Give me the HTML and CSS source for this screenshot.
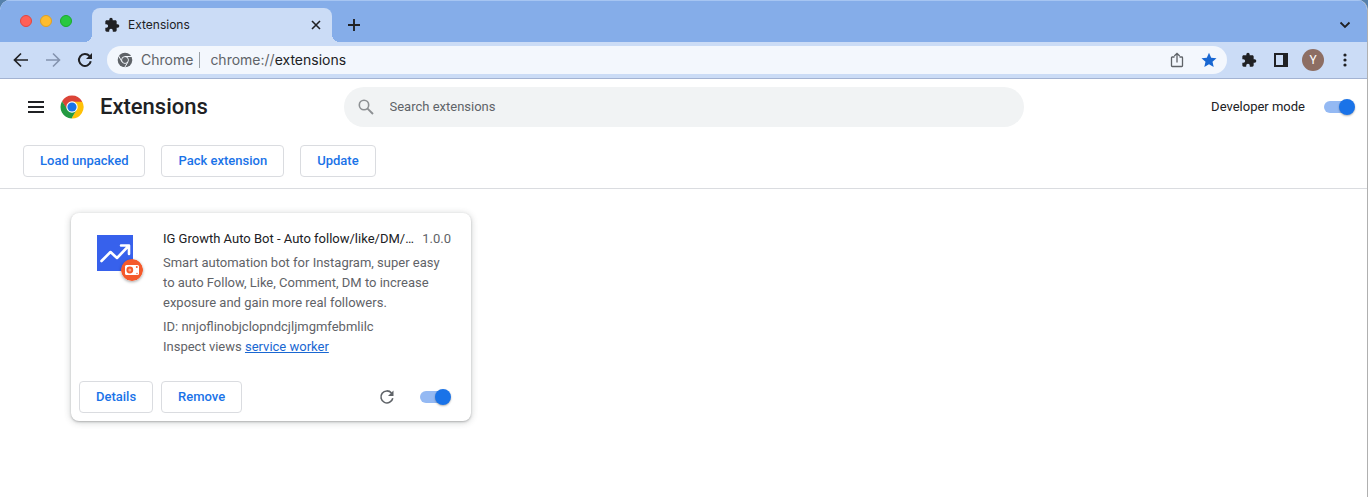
FILE: index.html
```html
<!DOCTYPE html>
<html lang="en">
<head>
<meta charset="utf-8">
<title>Extensions</title>
<link rel="stylesheet" href="styles.css">
</head>
<body>
<div class="window">
  <header class="tabstrip">
    <div class="lights">
      <button class="light close" aria-label="Close window"></button>
      <button class="light minimize" aria-label="Minimize window"></button>
      <button class="light maximize" aria-label="Maximize window"></button>
    </div>
    <div class="tab">
      <svg class="icon-16" viewBox="0 0 24 24"><path d="M20.500 11H19V7c0-1.100-.9-2-2-2h-4V3.500a2.500 2.500 0 0 0-5 0V5H4c-1.100 0-2 .9-2 2v3.800h1.500a2.700 2.700 0 0 1 0 5.400H2V20c0 1.100.9 2 2 2h3.800v-1.500a2.700 2.700 0 0 1 5.400 0V22H17c1.100 0 2-.9 2-2v-4h1.500a2.500 2.500 0 0 0 0-5z"/></svg>
      <span class="tab-title">Extensions</span>
      <button class="plain tab-close" aria-label="Close tab"><svg class="icon-12 stroke" viewBox="0 0 12 12"><path d="M2 2l8 8M10 2l-8 8" stroke-width="1.600"/></svg></button>
    </div>
    <button class="plain new-tab" aria-label="New tab"><svg class="icon-12 stroke" viewBox="0 0 12 12"><path d="M6 0v12M0 6h12" stroke-width="1.900"/></svg></button>
    <button class="plain tab-search" aria-label="Search tabs"><svg class="icon-12 stroke" viewBox="0 0 12 12"><path d="M1.500 3.500L6 8l4.500-4.500" stroke-width="1.800"/></svg></button>
  </header>

  <nav class="toolbar">
    <div class="nav-buttons">
      <button class="plain" aria-label="Back"><svg class="icon-16 stroke" viewBox="0 0 16 16"><path d="M15 8H2M8 1.500L1.500 8 8 14.500" stroke-width="1.700"/></svg></button>
      <button class="plain muted" aria-label="Forward"><svg class="icon-16 stroke" viewBox="0 0 16 16"><path d="M1 8h13M8 1.500L14.500 8 8 14.500" stroke-width="1.600"/></svg></button>
      <button class="plain" aria-label="Reload"><svg class="icon-16 stroke" viewBox="0 0 16 16"><path d="M13.800 9.300A6 6 0 1 1 12.500 4" stroke-width="2"/><path class="solid" d="M15 1v6H9z"/></svg></button>
    </div>
    <div class="omnibox">
      <svg class="icon-16 chrome-gray" viewBox="0 0 16 16"><circle cx="8" cy="8" r="7.300"/><g class="cut"><path d="M8 4.500H15M5 9.800L1.500 3.700M11 9.800L7.500 15.800" /><circle cx="8" cy="8" r="3.400"/></g><circle cx="8" cy="8" r="2.500"/></svg>
      <span class="site">Chrome</span>
      <span class="divider"></span>
      <label class="scheme" for="address">chrome://</label><input id="address" class="address" type="text" value="extensions">
      <button class="plain" aria-label="Share"><svg class="icon-16 share" viewBox="0 0 16 16"><path d="M5.500 5H3.200c-.4 0-.7.3-.7.7v8.100c0 .4.3.7.7.7h9.600c.4 0 .7-.3.7-.7V5.700c0-.4-.3-.7-.7-.7h-2.300M8 10.500V1.500M5.300 4L8 1.300 10.700 4"/></svg></button>
      <button class="plain star" aria-label="Bookmark"><svg class="icon-16" viewBox="0 0 16 16"><path d="M8 .7l2.200 5 5.300.5-4 3.600 1.200 5.300L8 12.300l-4.700 2.800 1.200-5.300-4-3.600 5.300-.5z"/></svg></button>
    </div>
    <div class="actions">
      <button class="plain" aria-label="Extensions menu"><svg class="icon-16" viewBox="0 0 24 24"><path d="M20.500 11H19V7c0-1.100-.9-2-2-2h-4V3.500a2.500 2.500 0 0 0-5 0V5H4c-1.100 0-2 .9-2 2v3.800h1.500a2.700 2.700 0 0 1 0 5.400H2V20c0 1.100.9 2 2 2h3.800v-1.500a2.700 2.700 0 0 1 5.400 0V22H17c1.100 0 2-.9 2-2v-4h1.500a2.500 2.500 0 0 0 0-5z"/></svg></button>
      <button class="plain" aria-label="Side panel"><svg class="icon-16" viewBox="0 0 16 16"><path fill-rule="evenodd" d="M1 1h14v14H1zM3 3v10h7V3z"/></svg></button>
      <button class="avatar" aria-label="Profile Y">Y</button>
      <button class="plain" aria-label="More"><svg class="icon-16" viewBox="0 0 16 16"><circle cx="8" cy="3" r="1.600"/><circle cx="8" cy="8" r="1.600"/><circle cx="8" cy="13" r="1.600"/></svg></button>
    </div>
  </nav>

  <main class="page">
    <div class="page-header">
      <div class="brand">
        <button class="plain" aria-label="Main menu"><svg class="icon-16 stroke" viewBox="0 0 16 16"><path d="M0 3h16M0 8h16M0 13h16" stroke-width="2"/></svg></button>
        <svg class="logo" viewBox="0 0 24 24"><path class="red" d="M2.040 6.250A11.500 11.500 0 0 1 21.960 6.250L22 7H12L7 15z"/><path class="yellow" d="M22.300 6.750A11.500 11.500 0 0 1 11.500 23.490L16.500 14.500 12 6.750z"/><path class="green" d="M11.500 23.490A11.500 11.500 0 0 1 2.040 6.250L7.400 14.500 12 17.300 16.700 14.600z"/><circle class="white" cx="12" cy="12" r="5.700"/><circle class="blue" cx="12" cy="12" r="4.600"/></svg>
        <h1 class="title">Extensions</h1>
      </div>
      <label class="search">
        <svg class="icon-16 stroke" viewBox="0 0 16 16"><circle cx="6" cy="6" r="4.700" stroke-width="1.600"/><path d="M9.300 9.300L15 15" stroke-width="1.900"/></svg>
        <input class="search-input" type="text" placeholder="Search extensions" aria-label="Search extensions">
      </label>
      <label class="dev-mode">Developer mode <input class="toggle" type="checkbox" checked></label>
    </div>
    <div class="dev-bar">
      <button class="btn">Load unpacked</button>
      <button class="btn">Pack extension</button>
      <button class="btn">Update</button>
    </div>
    <section class="cards">
      <article class="card">
        <div class="card-main">
          <div class="card-icon">
            <svg class="app-icon" viewBox="0 0 36 36"><path class="tile" d="M0 0h36v36H0z"/><path class="trend" d="M4.500 26L13.500 17l6.500 6L31.500 11M24 10.500H32v8.500"/></svg>
            <svg class="badge" viewBox="0 0 22 22"><circle class="orange" cx="11" cy="11" r="11"/><rect class="white" x="4" y="6" width="14" height="10" rx="1.500"/><circle class="orange" cx="8.800" cy="11" r="3.400"/><circle class="lens" cx="8.800" cy="11" r="1.500"/><circle class="orange" cx="15.800" cy="8" r="1"/><circle class="orange" cx="16" cy="14.500" r=".7"/></svg>
          </div>
          <div class="card-text">
            <div class="name-row"><h2 class="name">IG Growth Auto Bot - Auto follow/like/DM/…</h2><span class="version">1.0.0</span></div>
            <p class="description">Smart automation bot for Instagram, super easy to auto Follow, Like, Comment, DM to increase exposure and gain more real followers.</p>
            <p class="meta">ID: nnjoflinobjclopndcjljmgmfebmlilc</p>
            <p class="meta">Inspect views <a class="link" href="#">service worker</a></p>
          </div>
        </div>
        <div class="card-footer">
          <button class="btn">Details</button>
          <button class="btn">Remove</button>
          <button class="plain reload" aria-label="Reload extension"><svg class="icon-16 stroke" viewBox="0 0 16 16"><path d="M13.800 9.300A6 6 0 1 1 12.500 4" stroke-width="1.600"/><path class="solid" d="M14.500 1.500V7H9z"/></svg></button>
          <input class="toggle" type="checkbox" checked aria-label="Enable extension">
        </div>
      </article>
    </section>
  </main>
</div>
</body>
</html>
```

FILE: styles.css
```css
* { box-sizing: border-box; }

body {
  margin: 0;
  background: #5580ab;
  color: #202124;
  font: 13px/20px Roboto, "Liberation Sans", sans-serif;
}

h1, h2, p { margin: 0; }
button, input { font: inherit; color: inherit; }
svg { display: block; fill: currentColor; flex: none; }

.window {
  min-height: 100vh;
  display: flex;
  flex-direction: column;
  background: #fff;
  border-right: 1px solid #b0b0b0;
  border-radius: 10px 10px 0 0;
  overflow: hidden;
}

.icon-16 { width: 16px; height: 16px; }
.icon-12 { width: 12px; height: 12px; }
.stroke { fill: none; stroke: currentColor; }
.solid { fill: currentColor; stroke: none; }
.plain {
  display: grid;
  place-items: center;
  padding: 0;
  border: 0;
  background: none;
}

/* Tab strip */
.tabstrip {
  display: flex;
  align-items: flex-end;
  height: 42px;
  padding: 0 16px 0 20px;
  background: #85ade9;
  border-top: 1px solid #a6c5f2;
}
.lights { display: flex; gap: 8px; width: 72px; padding-bottom: 15px; }
.light { width: 12px; height: 12px; padding: 0; border: 1px solid; border-radius: 50%; }
.close { background: #ff5f57; border-color: #e2463f; }
.minimize { background: #febc2e; border-color: #dfa023; }
.maximize { background: #28c840; border-color: #1aab29; }
.tab {
  position: relative;
  display: flex;
  align-items: center;
  gap: 8px;
  width: 240px;
  height: 34px;
  padding: 0 10px 0 12px;
  background: #cbdcf6;
  border-radius: 8px 8px 0 0;
}
.tab::before, .tab::after {
  content: "";
  position: absolute;
  bottom: 0;
  width: 8px;
  height: 8px;
}
.tab::before { right: 100%; background: radial-gradient(circle at 0 0, transparent 8px, #cbdcf6 8px); }
.tab::after { left: 100%; background: radial-gradient(circle at 100% 0, transparent 8px, #cbdcf6 8px); }
.tab-title { flex: 1; font-family: Inter, Roboto, sans-serif; font-size: 12px; }
.new-tab { height: 34px; margin-left: 16px; }
.tab-search { height: 34px; margin-left: auto; }

/* Toolbar */
.toolbar {
  display: flex;
  align-items: center;
  height: 37px;
  padding: 0 6px 0 13px;
  background: #cbdcf6;
  border-bottom: 1px solid #a3b3d2;
}
.nav-buttons { display: flex; gap: 16px; width: 94px; }
.muted { color: #8493ae; }
.omnibox {
  flex: 1;
  display: flex;
  align-items: center;
  height: 28px;
  padding: 0 10px;
  background: #f3f7fd;
  border-radius: 14px;
  font-family: Inter, Roboto, sans-serif;
  font-size: 14px;
  color: #5f6368;
}
.chrome-gray { fill: #5f6368; }
.cut { fill: none; stroke: #f3f7fd; stroke-width: 1; }
.site { margin-left: 8px; }
.divider { width: 1px; height: 16px; margin: 0 10px 0 6px; background: #9aa0a6; }
.address { flex: 1; min-width: 0; padding: 0; border: 0; background: none; color: #202124; outline: 0; }
.share { fill: none; stroke: #5f6368; stroke-width: 1.300; }
.star { margin-left: 16px; color: #1967d2; }
.actions {
  display: grid;
  grid-template-columns: repeat(4, 32px);
  place-items: center;
  margin-left: 6px;
}
.avatar {
  width: 22px;
  height: 22px;
  padding: 0;
  border: 0;
  border-radius: 50%;
  background: #8d6e63;
  color: #fff;
  font-size: 12px;
}

/* Page header */
.page-header {
  display: grid;
  grid-template-columns: 1fr minmax(0, 680px) 1fr;
  align-items: center;
  height: 56px;
  padding: 0 12px 0 28px;
}
.brand { display: flex; align-items: center; gap: 16px; margin-right: 16px; }
.logo { width: 24px; height: 24px; }
.red { fill: #db4437; }
.yellow { fill: #ffc107; }
.green { fill: #249a41; }
.blue { fill: #1a73e8; }
.white { fill: #fff; }
.orange { fill: #f4592b; }
.lens { fill: #f9a68c; }
.title { font-size: 22px; line-height: 32px; font-weight: 500; }
.search {
  display: flex;
  align-items: center;
  gap: 16px;
  height: 40px;
  margin-left: -8px;
  margin-right: 8px;
  padding: 0 14px;
  border-radius: 20px;
  background: #f1f3f4;
  color: #8d9093;
}
.search-input { flex: 1; min-width: 0; padding: 0; border: 0; background: none; outline: 0; color: #202124; }
.search-input::placeholder { color: #5f6368; opacity: 1; }
.dev-mode { display: flex; align-items: center; justify-content: flex-end; gap: 19px; }

.toggle {
  appearance: none;
  position: relative;
  width: 31px;
  height: 16px;
  margin: 0;
}
.toggle::before {
  content: "";
  position: absolute;
  inset: 2px 3px 2px 0;
  border-radius: 6px;
  background: #94b9f3;
}
.toggle::after {
  content: "";
  position: absolute;
  top: 0;
  right: 0;
  width: 16px;
  height: 16px;
  border-radius: 50%;
  background: #1a73e8;
  box-shadow: 0 1px 2px rgba(0, 0, 0, .3);
}

.dev-bar { display: flex; gap: 16px; padding: 10px 23px 11px; border-bottom: 1px solid #dadce0; }
.btn {
  height: 32px;
  padding: 0 16px;
  border: 1px solid #dadce0;
  border-radius: 4px;
  background: #fff;
  color: #1a73e8;
  font-weight: 500;
}

/* Extension cards */
.cards {
  display: grid;
  grid-template-columns: repeat(auto-fill, 400px);
  gap: 12px;
  padding: 24px 71px;
}
.card {
  display: flex;
  flex-direction: column;
  border-radius: 8px;
  background: #fff;
  box-shadow: 0 1px 2px rgba(60, 64, 67, .3), 0 1px 6px 1px rgba(60, 64, 67, .2);
}
.card-main { display: flex; gap: 20px; padding: 16px 20px 0 26px; }
.card-icon { position: relative; width: 46px; height: 52px; padding-top: 6px; }
.app-icon { width: 36px; height: 36px; }
.tile { fill: #3761ec; }
.trend { fill: none; stroke: #fff; stroke-width: 2.600; stroke-linejoin: round; stroke-linecap: round; }
.badge {
  position: absolute;
  right: 0;
  bottom: 0;
  width: 22px;
  height: 22px;
  border-radius: 50%;
  box-shadow: 0 1px 3px rgba(0, 0, 0, .35);
}
.card-text { flex: 1; min-width: 0; color: #5f6368; }
.name-row { display: flex; gap: 8px; margin-bottom: 4px; }
.name {
  flex: 1;
  min-width: 0;
  white-space: nowrap;
  color: #202124;
  font-size: 13px;
  font-weight: 400;
}
.description { margin-bottom: 4px; }
.link { color: #1967d2; }
.card-footer { display: flex; align-items: center; gap: 8px; margin-top: 24px; padding: 0 20px 8px 8px; }
.reload { margin-left: auto; margin-right: 17px; color: #5f6368; }
```
